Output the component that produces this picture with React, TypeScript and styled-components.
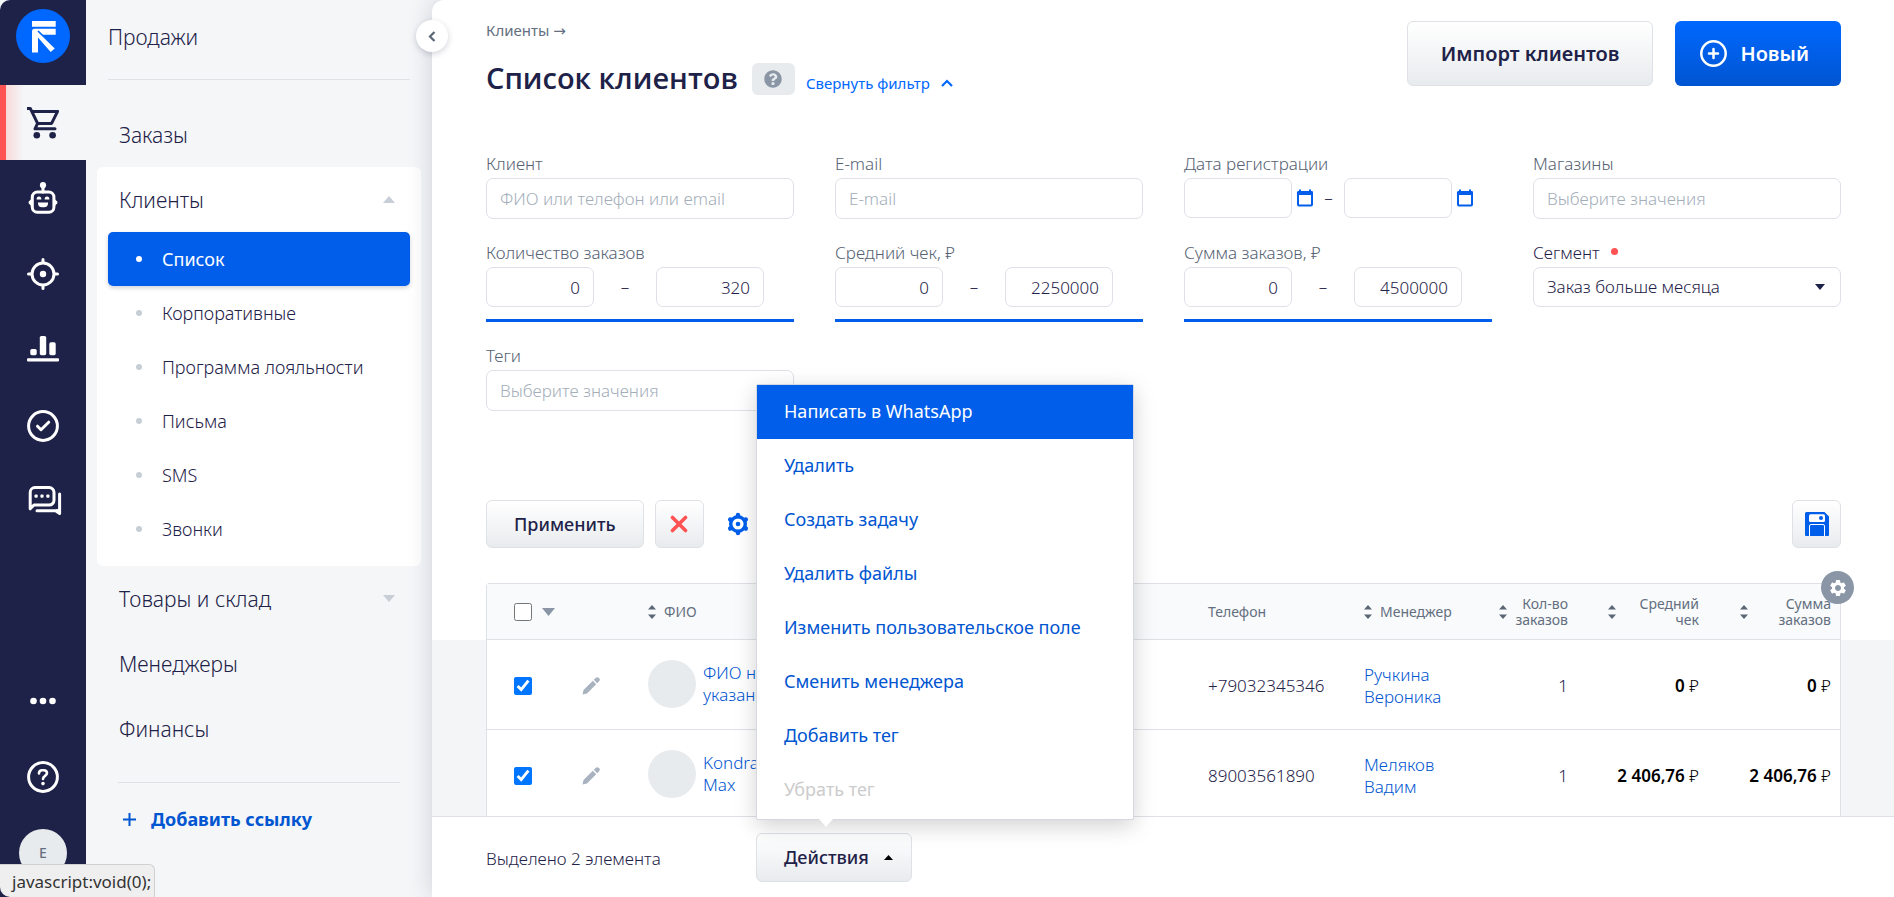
import React from "react";
import styled, { createGlobalStyle, css } from "styled-components";
import { FaQuestionCircle } from "react-icons/fa";
import { MdSettings } from "react-icons/md";

const color = {
  ink: "#1e2248",
  blue: "#005eeb",
  link: "#0055d1",
  grey: "#636f7f",
  label: "#566273",
  line: "#dee2e6",
  panel: "#f4f6f8",
};

const GlobalStyle = createGlobalStyle`
  *, *::before, *::after { box-sizing: border-box; }
  body {
    margin: 0;
    background: #fff;
    color: ${color.ink};
    font: 300 17px/22px "Noto Sans", "Open Sans", sans-serif;
  }
  button, input, select { font: inherit; color: inherit; margin: 0; }
  button { cursor: pointer; }
  a { color: ${color.link}; text-decoration: none; }
  ul { list-style: none; margin: 0; padding: 0; }
  svg { display: block; }
`;

const Page = styled.div`
  display: flex;
  height: 100vh;
  overflow: hidden;
  background: ${color.panel};
`;

/* ---------- icon rail ---------- */

const Rail = styled.nav`
  flex: none;
  display: flex;
  flex-direction: column;
  width: 86px;
  padding-bottom: 6px;
  background: ${color.ink};
  border-top-left-radius: 10px;
`;

const LogoLink = styled.a`
  display: flex;
  justify-content: center;
  height: 85px;
  padding-top: 9px;
`;

const RailLink = styled.a<{ $active?: boolean }>`
  display: flex;
  align-items: center;
  justify-content: center;
  height: 76px;
  color: #fff;
  ${(p) =>
    p.$active &&
    css`
      height: 75px;
      padding-right: 6px;
      color: ${color.ink};
      border-left: 6px solid #ff5353;
      background: linear-gradient(90deg, #f9d9da, ${color.panel} 18px);
    `}
`;

const RailBottom = styled.div`
  margin-top: auto;
`;

const Avatar = styled.span<{ $size: number }>`
  position: relative;
  flex: none;
  display: flex;
  align-items: center;
  justify-content: center;
  width: ${(p) => p.$size}px;
  height: ${(p) => p.$size}px;
  border-radius: 50%;
  background: #e8ebee;
  color: ${color.grey};
  font-size: 14px;
  font-weight: 500;
`;

const OnlineDot = styled.i`
  position: absolute;
  right: 2px;
  bottom: 1px;
  width: 12px;
  height: 12px;
  border-radius: 50%;
  background: #22a86d;
`;

/* ---------- section panel ---------- */

const Panel = styled.aside`
  flex: none;
  width: 346px;
  padding: 0 11px;
`;

const PanelTitle = styled.h2`
  margin: 0 11px 22px;
  height: 80px;
  border-bottom: 1px solid ${color.line};
  font-size: 21px;
  font-weight: 300;
  line-height: 74px;
`;

const Group = styled.section<{ $open?: boolean }>`
  padding-bottom: ${(p) => (p.$open ? 10 : 0)}px;
  border-radius: 6px;
  background: ${(p) => (p.$open ? "#fff" : "transparent")};
`;

const GroupLink = styled.a`
  display: flex;
  align-items: center;
  justify-content: space-between;
  height: 65px;
  padding: 0 26px 0 22px;
  color: ${color.ink};
  font-size: 21px;
`;

const SubLink = styled.a<{ $active?: boolean }>`
  display: flex;
  align-items: center;
  gap: 20px;
  height: 54px;
  margin: 0 11px;
  padding-left: 28px;
  border-radius: 5px;
  color: ${color.ink};
  font-size: 18px;
  &::before {
    content: "";
    width: 6px;
    height: 6px;
    border-radius: 50%;
    background: #c7ced6;
  }
  ${(p) =>
    p.$active &&
    css`
      background: ${color.blue};
      color: #fff;
      font-weight: 400;
      box-shadow: 0 2px 4px rgba(30, 34, 72, 0.2);
      &::before {
        background: #fff;
      }
    `}
`;

const AddLink = styled.a`
  display: flex;
  align-items: center;
  gap: 15px;
  margin: 21px 21px 0;
  padding: 25px 0 0 5px;
  border-top: 1px solid ${color.line};
  font-size: 18px;
  font-weight: 700;
`;

/* ---------- main area ---------- */

const Main = styled.main`
  position: relative;
  flex: 1;
  min-width: 0;
  display: flex;
  flex-direction: column;
  background: #fff;
  border-top-left-radius: 12px;
  box-shadow: 0 0 24px rgba(30, 34, 72, 0.18);
`;

const CollapseButton = styled.button`
  position: absolute;
  top: 20px;
  left: -16px;
  display: grid;
  place-items: center;
  width: 32px;
  height: 32px;
  padding: 0;
  border: 0;
  border-radius: 50%;
  background: #fff;
  box-shadow: 0 2px 6px rgba(30, 34, 72, 0.2);
`;

const Content = styled.div`
  flex: 1;
  min-height: 0;
  display: flex;
  flex-direction: column;
  overflow: hidden;
`;

const Header = styled.header`
  display: flex;
  justify-content: space-between;
  padding: 20px 53px 0 54px;
`;

const Crumb = styled.a`
  display: block;
  height: 22px;
  color: ${color.grey};
  font-size: 15px;
  font-weight: 400;
  line-height: 20px;
`;

const CrumbArrow = styled.span`
  font-family: "DejaVu Sans", sans-serif;
`;

const TitleRow = styled.div`
  display: flex;
  align-items: center;
  margin-top: 21px;
  height: 32px;
`;

const Title = styled.h1`
  margin: 0 14px 0 0;
  padding-bottom: 2px;
  font-family: "Open Sans", "Noto Sans", sans-serif;
  font-size: 29px;
  font-weight: 600;
  line-height: 30px;
`;

const HelpButton = styled.button`
  display: grid;
  place-items: center;
  width: 43px;
  height: 32px;
  padding: 0;
  border: 0;
  border-radius: 6px;
  background: #e8ebee;
  color: #8a96a6;
`;

const FilterToggle = styled.a`
  display: flex;
  align-items: center;
  gap: 11px;
  margin: 8px 0 0 11px;
  color: #0068ff;
  font-size: 15px;
  font-weight: 400;
`;

const HeaderActions = styled.div`
  display: flex;
  gap: 22px;
  padding-top: 1px;
`;

const Button = styled.button`
  display: flex;
  align-items: center;
  justify-content: center;
  height: 48px;
  padding: 0 27px;
  border: 1px solid ${color.line};
  border-radius: 6px;
  background: linear-gradient(#fff, #e8ebee);
  font-size: 18px;
  font-weight: 500;
`;

const LargeButton = styled(Button)`
  height: 65px;
  padding: 0 33px;
  font-size: 20px;
  font-weight: 600;
`;

const PrimaryButton = styled(LargeButton)`
  gap: 13px;
  padding: 0 32px 0 25px;
  border: 0;
  background: linear-gradient(#0068ff, #0055d1);
  color: #fff;
`;

const IconButton = styled(Button)`
  width: 49px;
  padding: 0;
`;

/* ---------- filter ---------- */

const Filters = styled.form`
  display: grid;
  grid-template-columns: repeat(4, 1fr);
  gap: 23px 41px;
  margin: 58px 53px 0 54px;
`;

const Field = styled.div`
  min-width: 0;
`;

const Label = styled.label<{ $dark?: boolean }>`
  display: flex;
  align-items: center;
  gap: 11px;
  margin-bottom: 3px;
  color: ${(p) => (p.$dark ? color.ink : color.label)};
`;

const RequiredDot = styled.i`
  width: 7px;
  height: 7px;
  margin-bottom: 4px;
  border-radius: 50%;
  background: #ff5353;
`;

const inputLook = css`
  height: 40px;
  border: 1px solid #dfe1e8;
  border-radius: 7px;
  background: #fff;
  outline: none;
`;

const TextInput = styled.input`
  ${inputLook}
  display: block;
  width: 100%;
  height: 41px;
  padding: 0 13px;
  &::placeholder {
    color: #a3aeb9;
    opacity: 1;
  }
`;

const ShortInput = styled.input`
  ${inputLook}
  width: 108px;
  padding: 0 13px;
  text-align: right;
`;

const Range = styled.div<{ $track?: boolean }>`
  display: flex;
  align-items: center;
  padding-bottom: ${(p) => (p.$track ? 12 : 0)}px;
  border-bottom: ${(p) => (p.$track ? `3px solid ${color.blue}` : "0")};
`;

const Dash = styled.span<{ $width: number }>`
  width: ${(p) => p.$width}px;
  text-align: center;
`;

const CalendarButton = styled.button`
  margin-left: 5px;
  padding: 0;
  border: 0;
  background: none;
`;

const SelectBox = styled.div`
  display: grid;
  align-items: center;
  & > * {
    grid-area: 1 / 1;
  }
  svg {
    justify-self: end;
    margin-right: 16px;
    pointer-events: none;
  }
`;

const Select = styled.select`
  ${inputLook}
  width: 100%;
  padding: 0 13px;
  appearance: none;
`;

const FilterActions = styled.div`
  display: flex;
  align-items: center;
  gap: 11px;
  margin: 89px 53px 0 54px;
`;

const PlainButton = styled.button`
  margin-left: 12px;
  padding: 0;
  border: 0;
  background: none;
`;

const Spacer = styled.span`
  flex: 1;
`;

/* ---------- table ---------- */

const TableArea = styled.div`
  flex: 1 0 auto;
  margin-top: 35px;
  padding: 0 53px 0 54px;
  background: linear-gradient(#fff 57px, #f4f5f7 57px);
`;

const TableFrame = styled.div`
  position: relative;
  border: 1px solid ${color.line};
  border-width: 1px 1px 0;
  border-top-left-radius: 4px;
  background: #fff;
`;

const ColumnsButton = styled.button`
  position: absolute;
  top: -13px;
  right: -14px;
  display: grid;
  place-items: center;
  width: 33px;
  height: 33px;
  padding: 0;
  border: 0;
  border-radius: 50%;
  background: #8a96a6;
  color: #fff;
`;

const Table = styled.table`
  width: 100%;
  table-layout: fixed;
  border-collapse: separate;
  border-spacing: 0;
`;

const Th = styled.th<{ $width?: number }>`
  width: ${(p) => (p.$width ? `${p.$width}px` : "auto")};
  height: 56px;
  padding: 0;
  border-bottom: 1px solid ${color.line};
  background: #f9fafc;
  color: ${color.grey};
  font-size: 14px;
  font-weight: 400;
  line-height: 16px;
  text-align: left;
`;

const HeadCell = styled.div<{ $numeric?: boolean }>`
  display: flex;
  align-items: center;
  gap: 8px;
  padding-right: 9px;
  justify-content: ${(p) => (p.$numeric ? "space-between" : "flex-start")};
  text-align: ${(p) => (p.$numeric ? "right" : "left")};
`;

const CheckCell = styled.div`
  display: flex;
  align-items: center;
  gap: 10px;
  padding-left: 27px;
`;

const Checkbox = styled.input`
  width: 18px;
  height: 18px;
  accent-color: #0075ff;
`;

const Td = styled.td<{ $numeric?: boolean; $strong?: boolean }>`
  height: 90px;
  padding: 2px ${(p) => (p.$numeric ? 9 : 0)}px 0 0;
  border-bottom: 1px solid ${color.line};
  text-align: ${(p) => (p.$numeric ? "right" : "left")};
  font-weight: ${(p) => (p.$strong ? 600 : 300)};
  color: ${(p) => (p.$strong ? "#000" : color.ink)};
  white-space: ${(p) => (p.$strong ? "nowrap" : "normal")};
`;

const Currency = styled.span`
  font-weight: 300;
`;

const Person = styled.div`
  display: flex;
  align-items: center;
  gap: 7px;
  padding-bottom: 3px;
`;

const PersonLink = styled.a`
  width: 80px;
`;

/* ---------- bottom bar ---------- */

const BottomBar = styled.footer`
  flex: none;
  display: flex;
  align-items: center;
  height: 81px;
  padding: 0 54px;
  border-top: 1px solid ${color.line};
  background: #fff;
`;

const Selected = styled.span`
  width: 270px;
  padding-top: 4px;
`;

const MenuAnchor = styled.div`
  position: relative;
`;

const MenuButton = styled(Button)`
  gap: 15px;
  height: 49px;
  padding: 0 18px 0 27px;
`;

const Menu = styled.ul`
  position: absolute;
  z-index: 2;
  bottom: 100%;
  left: 0;
  width: 378px;
  margin-bottom: 13px;
  padding-bottom: 2px;
  border: 1px solid #d5d9df;
  border-radius: 2px;
  background: #fff;
  box-shadow: 0 6px 22px rgba(0, 0, 0, 0.18);
  &::after {
    content: "";
    position: absolute;
    top: 100%;
    left: 62px;
    border: 7px solid transparent;
    border-top: 8px solid #fff;
    border-bottom: 0;
  }
`;

const MenuItem = styled.button<{ $active?: boolean }>`
  display: block;
  width: 100%;
  height: 54px;
  padding: 0 27px 2px;
  border: 0;
  background: ${(p) => (p.$active ? color.blue : "#fff")};
  color: ${(p) => (p.$active ? "#fff" : color.link)};
  font-size: 18px;
  font-weight: 400;
  text-align: left;
  white-space: nowrap;
  &:disabled {
    color: #ccc;
  }
`;

const StatusBubble = styled.div`
  position: fixed;
  left: 0;
  bottom: 0;
  z-index: 3;
  height: 33px;
  padding: 0 3px 0 12px;
  border: 1px solid #d0d0d0;
  border-width: 1px 1px 0 0;
  border-radius: 0 6px 0 10px;
  background: #efefef;
  color: #333;
  font-weight: 400;
  line-height: 34px;
`;

/* ---------- icons ---------- */

const Stroke = ({ size = 32, children }: { size?: number; children: React.ReactNode }) => (
  <svg width={size} height={size} viewBox="0 0 32 32" fill="none" stroke="currentColor" strokeWidth="3" strokeLinecap="round" strokeLinejoin="round" overflow="visible" aria-hidden="true">
    {children}
  </svg>
);

const Logo = () => (
  <svg width="54" height="54" viewBox="0 0 54 54" aria-hidden="true">
    <circle cx="27" cy="27" r="27" fill="#0068ff" />
    <path fill="#fff" d="M16 12h23.7v5.8H16zM18.5 19.8h21.2v6H27l-4.400-4.400-1.200 1 17.300 17.200-4 3.400L22 28.600v15h-6V22.300a2.500 2.500 0 0 1 2.500-2.500z" />
  </svg>
);

const CartIcon = () => (
  <Stroke>
    <path strokeLinecap="butt" d="M0 1.600h3.400L10.600 16.400h14L30.600 4.400H5" />
    <path d="M10.600 16.400 8 21.800h20" />
    <g fill="currentColor" stroke="none">
      <circle cx="9.800" cy="28.200" r="3.300" />
      <circle cx="25.600" cy="28.200" r="3.300" />
    </g>
  </Stroke>
);

const RobotIcon = () => (
  <Stroke>
    <rect x="5.300" y="10" width="21.600" height="20.200" rx="5" />
    <path d="M16 4v6" />
    <g fill="currentColor" stroke="none">
      <circle cx="16" cy="3.200" r="3.100" />
      <path d="M4.500 17a3.500 3.500 0 0 0-1.600 1.600A2 2 0 0 0 2.900 22.400 3.500 3.500 0 0 0 4.500 24zM27.500 17a3.500 3.500 0 0 1 1.600 1.600 2 2 0 0 1 0 3.800 3.500 3.500 0 0 1-1.600 1.600z" />
      <path d="M9.600 17.600a2.400 3 0 0 1 4.800 0zM17.600 17.600a2.400 3 0 0 1 4.800 0z" />
      <path d="M11 20.600h10v.6a4 4 0 0 1-4 4h-2a4 4 0 0 1-4-4z" />
    </g>
  </Stroke>
);

const TargetIcon = () => (
  <Stroke>
    <circle cx="16" cy="16" r="11" />
    <path d="M16 1.500v3M16 27.500v3M1.500 16h3M27.500 16h3" />
    <circle cx="16" cy="16" r="3.200" fill="currentColor" stroke="none" />
  </Stroke>
);

const ChartIcon = () => (
  <Stroke>
    <g fill="currentColor" stroke="none">
      <rect x="3.300" y="15" width="6.400" height="6.200" rx="1.600" />
      <rect x="12.800" y="2" width="6.400" height="19.200" rx="1.600" />
      <rect x="22.300" y="8.300" width="6.400" height="12.900" rx="1.600" />
      <rect x="0" y="24.300" width="32" height="3.200" rx="1" />
    </g>
  </Stroke>
);

const CheckIcon = () => (
  <Stroke>
    <circle cx="16" cy="16" r="14.400" />
    <path d="m10.500 16.200 3.500 3.500 7.700-7.500" />
  </Stroke>
);

const ChatIcon = () => (
  <Stroke>
    <path d="M3.200 22.800V6.400A4.800 4.800 0 0 1 8 1.600h14.200A4.800 4.800 0 0 1 27 6.400v7.800a4.800 4.800 0 0 1-4.800 4.800H7z" />
    <path d="M32.600 8v19.500l-4-2.700H10" />
    <path d="M30 24.500h2.500" />
    <g fill="currentColor" stroke="none">
      <rect x="7.500" y="8.600" width="3.200" height="3.200" rx="1" />
      <rect x="13.400" y="8.600" width="3.200" height="3.200" rx="1" />
      <rect x="19.300" y="8.600" width="3.200" height="3.200" rx="1" />
    </g>
  </Stroke>
);

const DotsIcon = () => (
  <Stroke>
    <g fill="currentColor" stroke="none">
      <circle cx="6.500" cy="16" r="3.300" />
      <circle cx="16" cy="16" r="3.300" />
      <circle cx="25.500" cy="16" r="3.300" />
    </g>
  </Stroke>
);

const HelpIcon = () => (
  <Stroke>
    <circle cx="16" cy="16" r="14.400" />
    <path strokeWidth="2.600" d="M12 12.500V12a3 3 0 0 1 3-2.700h2A3 3 0 0 1 20 12c0 3-4 2.800-4 6" />
    <circle cx="16" cy="22.600" r="1.800" fill="currentColor" stroke="none" />
  </Stroke>
);

const Triangle = ({ up, fill, w, h }: { up?: boolean; fill: string; w: number; h: number }) => (
  <svg width={w} height={h} viewBox="0 0 12 8" preserveAspectRatio="none" fill={fill} aria-hidden="true">
    <path d={up ? "M0 8 6 0l6 8z" : "M0 0h12L6 8z"} />
  </svg>
);

const SortIcon = () => (
  <svg width="8" height="14" viewBox="0 0 8 14" fill="#5c6675" aria-hidden="true">
    <path d="M0 4.500 4 0l4 4.500zM0 9.500h8L4 14z" />
  </svg>
);

const PlusCircleIcon = () => (
  <svg width="27" height="27" viewBox="0 0 27 27" fill="none" stroke="#fff" strokeWidth="2.500" strokeLinecap="round" aria-hidden="true">
    <circle cx="13.500" cy="13.500" r="12.200" />
    <path d="M13.500 9v9M9 13.500h9" />
  </svg>
);

const CalendarIcon = () => (
  <svg width="16" height="18" viewBox="0 0 16 18" fill="none" aria-hidden="true">
    <rect x="1" y="3" width="14" height="13.500" rx="1" stroke={color.blue} strokeWidth="2" />
    <path d="M0 3.500A1.500 1.500 0 0 1 1.500 2H2V.5h2V2h8V.5h2V2h.5A1.500 1.500 0 0 1 16 3.500V6H0z" fill={color.blue} />
  </svg>
);

const GearOutlineIcon = () => (
  <svg width="22" height="24" viewBox="1 0 22 24" fill="none" stroke={color.blue} strokeLinecap="round" aria-hidden="true">
    <circle cx="12" cy="12" r="7.300" strokeWidth="3.400" />
    <path strokeWidth="4.400" d="M12 3v1M4.200 7.500l1 .6M18.800 15.900l1 .6M4.200 16.500l1-.6M18.800 8.100l1-.6M12 20v1" />
    <circle cx="12" cy="12" r="2.300" fill={color.blue} stroke="none" />
  </svg>
);

const CrossIcon = () => (
  <svg width="18" height="18" viewBox="0 0 18 18" stroke="#ff5353" strokeWidth="3.600" strokeLinecap="round" aria-hidden="true">
    <path d="m2.500 2.500 13 13M15.500 2.500l-13 13" />
  </svg>
);

const SaveIcon = () => (
  <svg width="24" height="24" viewBox="0 0 24 24" aria-hidden="true">
    <path fill={color.blue} d="M1.500 0h18L24 4.500V23a1 1 0 0 1-1 1H1a1 1 0 0 1-1-1V1.500A1.500 1.500 0 0 1 1.500 0z" />
    <rect x="4" y="2.200" width="16" height="7.800" rx="1.500" fill="#fff" />
    <circle cx="16" cy="6" r="2" fill={color.blue} />
    <path d="M4.500 24.500V14a1.500 1.500 0 0 1 1.500-1.500h12a1.500 1.500 0 0 1 1.500 1.500v10.500" fill={color.blue} stroke="#fff" />
  </svg>
);

const PencilIcon = () => (
  <svg width="18" height="18" viewBox="0 0 18 18" fill="#a9b3bf" aria-hidden="true">
    <path d="M.5 17.500 1.500 13 10.800 3.800l3.400 3.400L5 16.500zM11.800 2.800 13.600 1a2.300 2.300 0 0 1 3.300 0l.1.100a2.300 2.300 0 0 1 0 3.300l-1.800 1.800z" />
  </svg>
);

const Chevron = ({ d, stroke, w, h }: { d: string; stroke: string; w: number; h: number }) => (
  <svg width={w} height={h} viewBox={`0 0 ${w} ${h}`} fill="none" stroke={stroke} strokeWidth="2.200" aria-hidden="true">
    <path d={d} />
  </svg>
);

/* ---------- data ---------- */

const railItems = [
  { label: "Продажи", icon: <CartIcon />, active: true },
  { label: "Боты", icon: <RobotIcon /> },
  { label: "Маркетинг", icon: <TargetIcon /> },
  { label: "Аналитика", icon: <ChartIcon /> },
  { label: "Задачи", icon: <CheckIcon /> },
  { label: "Чаты", icon: <ChatIcon /> },
];

const clientLinks = ["Список", "Корпоративные", "Программа лояльности", "Письма", "SMS", "Звонки"];

const ranges = [
  { id: "count", label: "Количество заказов", from: "0", to: "320" },
  { id: "average", label: "Средний чек, ₽", from: "0", to: "2250000" },
  { id: "total", label: "Сумма заказов, ₽", from: "0", to: "4500000" },
];

const clients = [
  { name: "ФИО не указано", phone: "+79032345346", manager: ["Ручкина", "Вероника"], orders: 1, sum: "0" },
  { name: "Kondratev Max", phone: "89003561890", manager: ["Меляков", "Вадим"], orders: 1, sum: "2 406,76" },
];

const actions = [
  "Написать в WhatsApp",
  "Удалить",
  "Создать задачу",
  "Удалить файлы",
  "Изменить пользовательское поле",
  "Сменить менеджера",
  "Добавить тег",
  "Убрать тег",
];

const TextField = ({ id, label, placeholder }: { id: string; label: string; placeholder: string }) => (
  <Field>
    <Label htmlFor={id}>{label}</Label>
    <TextInput id={id} placeholder={placeholder} />
  </Field>
);

const RangeField = ({ id, label, from, to }: (typeof ranges)[number]) => (
  <Field>
    <Label htmlFor={id}>{label}</Label>
    <Range $track>
      <ShortInput id={id} defaultValue={from} />
      <Dash $width={62}>–</Dash>
      <ShortInput aria-label={`${label} до`} defaultValue={to} />
    </Range>
  </Field>
);

export default function App() {
  return (
    <>
      <GlobalStyle />
      <Page>
        <Rail>
          <LogoLink href="#" aria-label="На главную">
            <Logo />
          </LogoLink>
          {railItems.map((item) => (
            <RailLink key={item.label} href="#" aria-label={item.label} $active={item.active}>
              {item.icon}
            </RailLink>
          ))}
          <RailBottom>
            <RailLink href="#" aria-label="Ещё">
              <DotsIcon />
            </RailLink>
            <RailLink href="#" aria-label="Помощь">
              <HelpIcon />
            </RailLink>
            <RailLink href="#" aria-label="Профиль">
              <Avatar $size={48}>
                E<OnlineDot />
              </Avatar>
            </RailLink>
          </RailBottom>
        </Rail>

        <Panel>
          <PanelTitle>Продажи</PanelTitle>
          <Group>
            <GroupLink href="#">Заказы</GroupLink>
          </Group>
          <Group $open>
            <GroupLink href="#">
              Клиенты
              <Triangle up fill="#c7ced6" w={12} h={7} />
            </GroupLink>
            {clientLinks.map((name, i) => (
              <SubLink key={name} href="#" $active={i === 0}>
                {name}
              </SubLink>
            ))}
          </Group>
          <Group>
            <GroupLink href="#">
              Товары и склад
              <Triangle fill="#c7ced6" w={12} h={7} />
            </GroupLink>
            <GroupLink href="#">Менеджеры</GroupLink>
            <GroupLink href="#">Финансы</GroupLink>
          </Group>
          <AddLink href="#">
            <svg width="13" height="13" viewBox="0 0 13 13" stroke={color.link} strokeWidth="2" aria-hidden="true">
              <path d="M6.500 0v13M0 6.500h13" />
            </svg>
            Добавить ссылку
          </AddLink>
        </Panel>

        <Main>
          <CollapseButton aria-label="Свернуть меню">
            <Chevron d="M6.500 1 2 5.500l4.500 4.500" stroke="#5c6675" w={8} h={11} />
          </CollapseButton>

          <Content>
            <Header>
              <div>
                <Crumb href="#">
                  Клиенты <CrumbArrow>→</CrumbArrow>
                </Crumb>
                <TitleRow>
                  <Title>Список клиентов</Title>
                  <HelpButton aria-label="Справка">
                    <FaQuestionCircle size={18} />
                  </HelpButton>
                  <FilterToggle href="#">
                    Свернуть фильтр
                    <Chevron d="m1 7 5-5 5 5" stroke="#0068ff" w={12} h={9} />
                  </FilterToggle>
                </TitleRow>
              </div>
              <HeaderActions>
                <LargeButton>Импорт клиентов</LargeButton>
                <PrimaryButton>
                  <PlusCircleIcon />
                  Новый
                </PrimaryButton>
              </HeaderActions>
            </Header>

            <Filters>
              <TextField id="client" label="Клиент" placeholder="ФИО или телефон или email" />
              <TextField id="email" label="E-mail" placeholder="E-mail" />
              <Field>
                <Label htmlFor="date">Дата регистрации</Label>
                <Range>
                  <ShortInput id="date" />
                  <CalendarButton type="button" aria-label="Выбрать дату от">
                    <CalendarIcon />
                  </CalendarButton>
                  <Dash $width={31}>–</Dash>
                  <ShortInput aria-label="Дата регистрации до" />
                  <CalendarButton type="button" aria-label="Выбрать дату до">
                    <CalendarIcon />
                  </CalendarButton>
                </Range>
              </Field>
              <TextField id="shops" label="Магазины" placeholder="Выберите значения" />
              {ranges.map((range) => (
                <RangeField key={range.id} {...range} />
              ))}
              <Field>
                <Label htmlFor="segment" $dark>
                  Сегмент <RequiredDot />
                </Label>
                <SelectBox>
                  <Select id="segment">
                    <option>Заказ больше месяца</option>
                  </Select>
                  <Triangle fill={color.ink} w={10} h={6} />
                </SelectBox>
              </Field>
              <TextField id="tags" label="Теги" placeholder="Выберите значения" />
            </Filters>

            <FilterActions>
              <Button>Применить</Button>
              <IconButton aria-label="Сбросить">
                <CrossIcon />
              </IconButton>
              <PlainButton aria-label="Настроить фильтр">
                <GearOutlineIcon />
              </PlainButton>
              <Spacer />
              <IconButton aria-label="Сохранить фильтр">
                <SaveIcon />
              </IconButton>
            </FilterActions>

            <TableArea>
              <TableFrame>
                <Table>
                  <thead>
                    <tr>
                      <Th $width={95}>
                        <CheckCell>
                          <Checkbox type="checkbox" aria-label="Выбрать всех" />
                          <Triangle fill="#8a96a6" w={13} h={8} />
                        </CheckCell>
                      </Th>
                      <Th $width={66} />
                      <Th>
                        <HeadCell>
                          <SortIcon />
                          ФИО
                        </HeadCell>
                      </Th>
                      <Th $width={156}>Телефон</Th>
                      <Th $width={135}>
                        <HeadCell>
                          <SortIcon />
                          Менеджер
                        </HeadCell>
                      </Th>
                      <Th $width={78}>
                        <HeadCell $numeric>
                          <SortIcon />
                          <span>
                            Кол-во
                            <br />
                            заказов
                          </span>
                        </HeadCell>
                      </Th>
                      <Th $width={31} />
                      <Th $width={100}>
                        <HeadCell $numeric>
                          <SortIcon />
                          <span>
                            Средний
                            <br />
                            чек
                          </span>
                        </HeadCell>
                      </Th>
                      <Th $width={32} />
                      <Th $width={100}>
                        <HeadCell $numeric>
                          <SortIcon />
                          <span>
                            Сумма
                            <br />
                            заказов
                          </span>
                        </HeadCell>
                      </Th>
                    </tr>
                  </thead>
                  <tbody>
                    {clients.map((client) => (
                      <tr key={client.phone}>
                        <Td>
                          <CheckCell>
                            <Checkbox type="checkbox" defaultChecked aria-label={client.name} />
                          </CheckCell>
                        </Td>
                        <Td>
                          <PencilIcon />
                        </Td>
                        <Td>
                          <Person>
                            <Avatar $size={48} />
                            <PersonLink href="#">{client.name}</PersonLink>
                          </Person>
                        </Td>
                        <Td>{client.phone}</Td>
                        <Td>
                          <a href="#">
                            {client.manager[0]}
                            <br />
                            {client.manager[1]}
                          </a>
                        </Td>
                        <Td $numeric>{client.orders}</Td>
                        <Td $numeric $strong colSpan={2}>
                          {client.sum} <Currency>₽</Currency>
                        </Td>
                        <Td $numeric $strong colSpan={2}>
                          {client.sum} <Currency>₽</Currency>
                        </Td>
                      </tr>
                    ))}
                  </tbody>
                </Table>
                <ColumnsButton aria-label="Настроить столбцы">
                  <MdSettings size={20} />
                </ColumnsButton>
              </TableFrame>
            </TableArea>
          </Content>

          <BottomBar>
            <Selected>Выделено 2 элемента</Selected>
            <MenuAnchor>
              <MenuButton aria-expanded="true">
                Действия
                <Triangle up fill="#000" w={9} h={5} />
              </MenuButton>
              <Menu>
                {actions.map((name, i) => (
                  <li key={name}>
                    <MenuItem $active={i === 0} disabled={i === actions.length - 1}>
                      {name}
                    </MenuItem>
                  </li>
                ))}
              </Menu>
            </MenuAnchor>
          </BottomBar>
        </Main>
      </Page>
      <StatusBubble>javascript:void(0);</StatusBubble>
    </>
  );
}
